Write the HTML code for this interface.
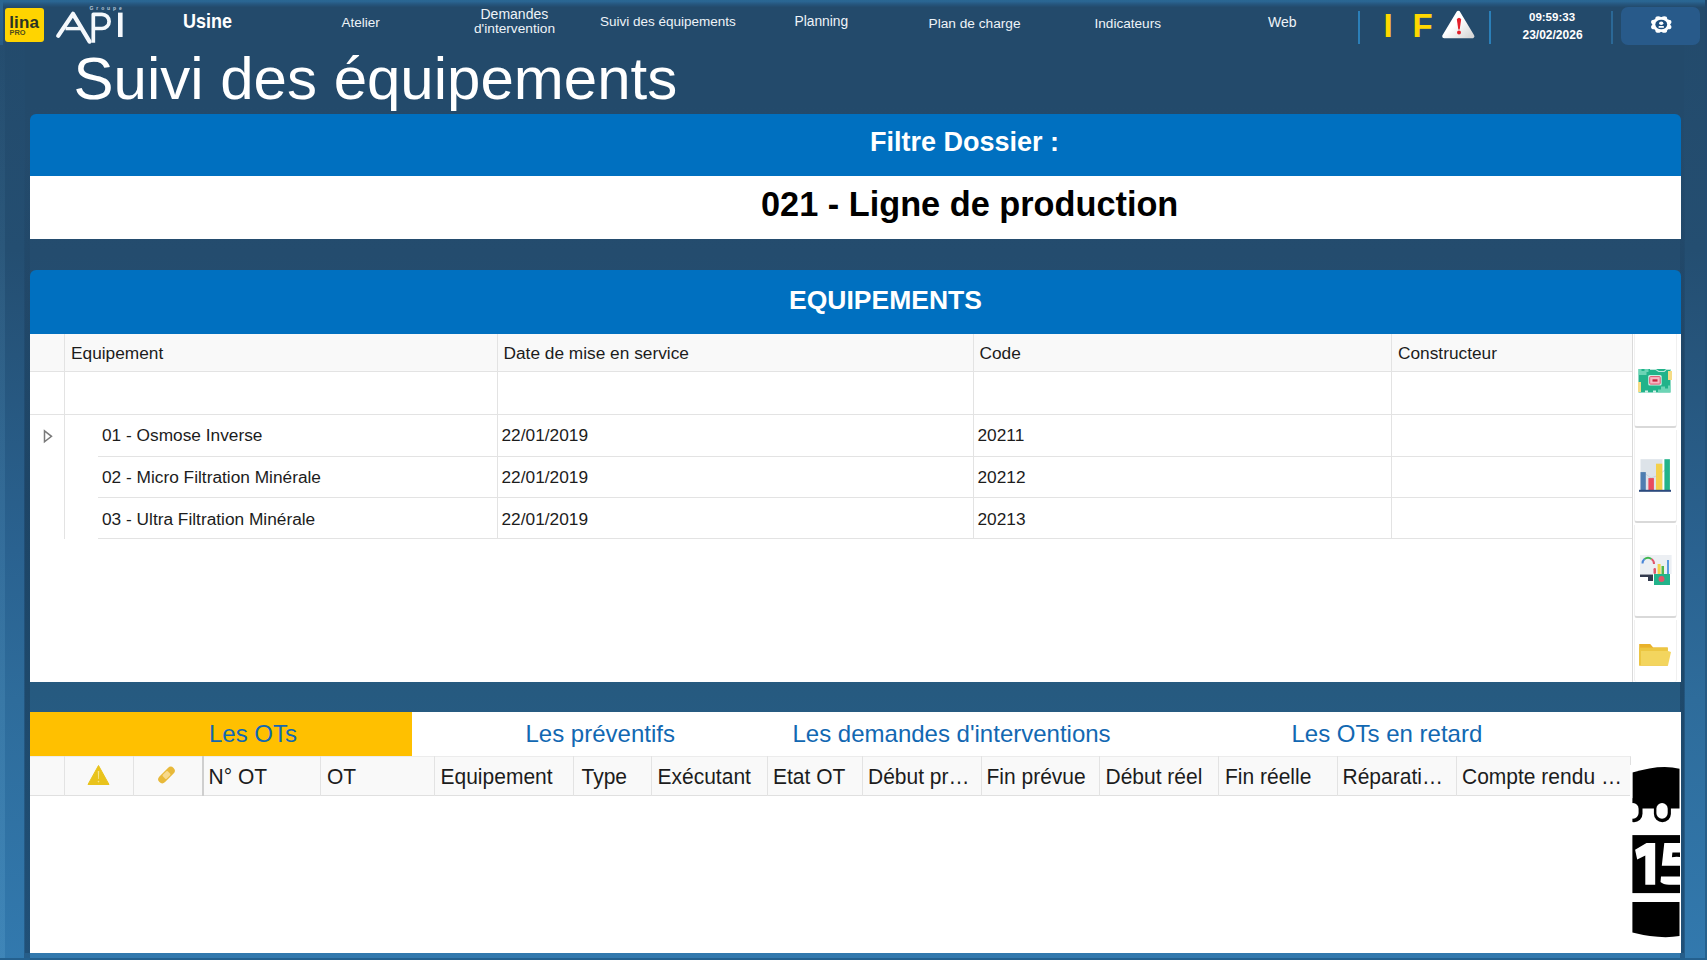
<!DOCTYPE html>
<html><head><meta charset="utf-8">
<style>
*{margin:0;padding:0;box-sizing:border-box}
html,body{width:1707px;height:960px;overflow:hidden}
body{position:relative;font-family:"Liberation Sans",sans-serif;background:linear-gradient(180deg,#234a6b 0px,#244e71 250px,#2a6290 550px,#2e6c9b 700px,#3279ae 960px)}
.ovl{position:absolute;left:25px;top:4px;width:1659px;height:949px;background:linear-gradient(180deg,#234a6b 0px,#234a6b 100px,#244c6e 250px,#265a80 690px,#2a6694 949px)}
.edgeL{position:absolute;left:24px;top:0;width:6px;height:960px;background:linear-gradient(180deg,rgba(10,30,55,0) 0,rgba(10,30,55,0) 150px,rgba(10,30,55,0.28) 500px,rgba(10,30,55,0.3) 960px)}
.edgeR{position:absolute;left:1680px;top:0;width:5px;height:960px;background:linear-gradient(180deg,rgba(10,30,55,0) 0,rgba(10,30,55,0) 150px,rgba(10,30,55,0.28) 500px,rgba(10,30,55,0.3) 960px)}
.lstrip{position:absolute;left:0;top:0;width:5px;height:960px;background:linear-gradient(180deg,rgba(255,255,255,0) 0,rgba(120,190,230,0.10) 300px,rgba(120,190,230,0.18) 960px)}
.a{position:absolute;white-space:nowrap;line-height:1}
.topband{position:absolute;left:0;top:0;width:1707px;height:7px;background:linear-gradient(180deg,#2a6793 0,#2a6592 1.5px,#26577f 4px,#234b6d 7px)}
.nav{color:#eef3f8;font-size:14px}
.sep{position:absolute;top:11px;width:2px;height:33px;background:#2b7fb8}
.panel{position:absolute;left:29.5px;width:1651px;background:#fff}
.phead{position:absolute;left:29.5px;width:1651px;background:#0070c0;border-radius:6px 6px 0 0}
.bg-strip{position:absolute}
.txt{color:#1c1c1c;font-size:17.3px}
.hline{position:absolute;height:1px;background:#e3e3e3}
.vline{position:absolute;width:1px;background:#e3e3e3}
.tab{color:#1268b2;font-size:24px}
.th{color:#1c1c1c;font-size:21px;transform:scaleY(1.08);transform-origin:0 17.8px}
.sbtn{position:absolute;left:1634px;width:43px;background:#fff;border:1px solid #f0f0f0;border-top:none;border-bottom:2px solid #d9d9d9;border-radius:0 0 3px 3px}
</style></head><body>
<div class="ovl"></div>
<div class="lstrip"></div>
<div class="edgeL"></div>
<div class="edgeR"></div>
<div class="topband"></div>
<div class="a" style="left:0;top:0;width:3px;height:45px;background:linear-gradient(180deg,#2c6793,#285b85)"></div>
<div class="a" style="left:0;top:958px;width:1707px;height:2px;background:#24608e"></div>
<div class="a" style="left:1705px;top:0;width:2px;height:960px;background:linear-gradient(180deg,#22476a,#26628f)"></div>

<!-- lina logo -->
<div class="a" style="left:5px;top:8px;width:39px;height:34px;background:#ffd400;border-radius:3px"></div>
<div class="a" style="left:9.3px;top:13.6px;font-size:17px;font-weight:700;color:#2a3324;letter-spacing:0.1px">lina</div>
<div class="a" style="left:9.6px;top:29.3px;font-size:7.4px;font-weight:700;color:#4f4c1c">PRO</div>

<!-- API logo -->
<svg class="a" style="left:0;top:0" width="140" height="50" viewBox="0 0 140 50">
 <g stroke="#f4f8fc" fill="none" stroke-linejoin="round">
  <path d="M58.2,35.8 L73,13.8 L89.6,41.6" stroke-width="4.2" stroke-linecap="round"/>
  <path d="M65.5,28.6 L80.5,28.6" stroke-width="3.4"/>
  <path d="M93.3,42.8 L93.3,14.3 L102,14.3 A7.1,7.1 0 0 1 102,28.5 L93.5,28.5" stroke-width="3.7"/>
  <path d="M120.3,12.6 L120.3,37" stroke-width="4.6"/>
 </g>
 <text x="89.5" y="10.2" font-family="Liberation Sans" font-size="5" font-weight="700" fill="#b7c8d8" letter-spacing="2.9">Groupe</text>
</svg>

<!-- nav -->
<div class="a" style="left:183px;top:12.9px;font-size:18px;font-weight:700;color:#fff;transform:scaleY(1.12);transform-origin:0 15.2px">Usine</div>
<div class="a nav" style="left:341.5px;top:15.5px;font-size:13.5px">Atelier</div>
<div class="a nav" style="left:480.5px;top:6.6px">Demandes</div>
<div class="a nav" style="left:474px;top:21.8px;font-size:13.7px">d'intervention</div>
<div class="a nav" style="left:600px;top:15.2px;font-size:13.5px">Suivi des équipements</div>
<div class="a nav" style="left:794.5px;top:15.4px;font-size:13.8px">Planning</div>
<div class="a nav" style="left:928.5px;top:16.9px;font-size:13.7px">Plan de charge</div>
<div class="a nav" style="left:1094.5px;top:16.9px;font-size:13.6px">Indicateurs</div>
<div class="a nav" style="left:1268px;top:14.9px">Web</div>

<div class="sep" style="left:1357.5px"></div>
<div class="a" style="left:1383.5px;top:9px;font-size:33px;font-weight:700;color:#ffd800">I</div>
<div class="a" style="left:1412.5px;top:9px;font-size:33px;font-weight:700;color:#ffd800">F</div>
<svg class="a" style="left:1440px;top:9px" width="37" height="31" viewBox="0 0 37 31">
 <defs><linearGradient id="wg" x1="0" y1="0" x2="1" y2="1"><stop offset="0.45" stop-color="#fff"/><stop offset="1" stop-color="#d6d6d6"/></linearGradient></defs>
 <polygon points="18.3,3.8 32.4,27.2 4.2,27.2" fill="url(#wg)" stroke="url(#wg)" stroke-width="4" stroke-linejoin="round"/>
 <path d="M16.8,10.2 Q19,7.2 21.2,10.2 L19.7,20.5 L18.3,20.5 Z" fill="#e3202b"/>
 <circle cx="19" cy="23.6" r="2" fill="#e3202b"/>
</svg>
<div class="sep" style="left:1489px"></div>
<div class="a" style="left:1529px;top:11.6px;font-size:11.5px;font-weight:700;color:#fff">09:59:33</div>
<div class="a" style="left:1522.5px;top:29.2px;font-size:12px;font-weight:700;color:#fff">23/02/2026</div>
<div class="sep" style="left:1611px;width:1.5px;background:#2b6896"></div>
<div class="a" style="left:1621px;top:7px;width:79px;height:38px;background:#285a8a;border-radius:7px"></div>
<svg class="a" style="left:1645px;top:10px" width="34" height="30" viewBox="0 0 34 30">
 <g transform="translate(16.25 14.5) scale(1.22 1)">
  <g fill="#fff"><circle r="7.4"/><circle cx="6.01" cy="2.49" r="2.35"/><circle cx="2.49" cy="6.01" r="2.35"/><circle cx="-2.49" cy="6.01" r="2.35"/><circle cx="-6.01" cy="2.49" r="2.35"/><circle cx="-6.01" cy="-2.49" r="2.35"/><circle cx="-2.49" cy="-6.01" r="2.35"/><circle cx="2.49" cy="-6.01" r="2.35"/><circle cx="6.01" cy="-2.49" r="2.35"/></g>
  <circle r="4.85" fill="#1f4f7e"/>
  <circle cx="0" cy="-1.3" r="1.75" fill="#fff"/>
  <rect x="-2.2" y="1.6" width="4.4" height="1.6" rx="0.5" fill="#fff"/>
 </g>
</svg>

<!-- title -->
<div class="a" style="left:73.5px;top:49.2px;font-size:60px;color:#fff">Suivi des équipements</div>

<!-- panel 1 -->
<div class="phead" style="top:114px;height:62px"></div>
<div class="panel" style="top:176px;height:63px"></div>
<div class="a" style="left:870px;top:129.3px;font-size:27px;font-weight:700;color:#fff">Filtre Dossier :</div>
<div class="a" style="left:761px;top:186.6px;font-size:34.3px;font-weight:700;color:#000">021 - Ligne de production</div>

<!-- panel 2 -->
<div class="phead" style="top:270px;height:64px"></div>
<div class="panel" style="top:334px;height:348px"></div>
<div class="a" style="left:789px;top:287.2px;font-size:26.5px;font-weight:700;color:#fff">EQUIPEMENTS</div>
<!-- table header -->
<div class="a" style="left:29.5px;top:334px;width:1602.5px;height:37px;background:#f9f9f9"></div>
<div class="hline" style="left:30px;top:371px;width:1602px"></div>
<div class="hline" style="left:30px;top:414px;width:1602px"></div>
<div class="hline" style="left:98px;top:455.5px;width:1534px"></div>
<div class="hline" style="left:98px;top:497px;width:1534px"></div>
<div class="hline" style="left:98px;top:538px;width:1534px"></div>
<div class="vline" style="left:64px;top:334px;height:205px"></div>
<div class="vline" style="left:496.5px;top:334px;height:204px"></div>
<div class="vline" style="left:972.5px;top:334px;height:204px"></div>
<div class="vline" style="left:1391px;top:334px;height:204px"></div>
<div class="vline" style="left:1632px;top:334px;height:348px;background:#dadada"></div>
<div class="a txt" style="left:71px;top:345.2px">Equipement</div>
<div class="a txt" style="left:503.5px;top:345.2px">Date de mise en service</div>
<div class="a txt" style="left:979.5px;top:345.2px">Code</div>
<div class="a txt" style="left:1398px;top:345.2px">Constructeur</div>
<svg class="a" style="left:42px;top:429px" width="12" height="15" viewBox="0 0 12 15"><path d="M2.5,1.8 L9.5,7.3 L2.5,12.8 Z" fill="none" stroke="#7a7a7a" stroke-width="1.5"/></svg>
<div class="a txt" style="left:102px;top:427.4px">01 - Osmose Inverse</div>
<div class="a txt" style="left:102px;top:469px">02 - Micro Filtration Minérale</div>
<div class="a txt" style="left:102px;top:510.5px">03 - Ultra Filtration Minérale</div>
<div class="a txt" style="left:501.5px;top:427.4px">22/01/2019</div>
<div class="a txt" style="left:501.5px;top:469px">22/01/2019</div>
<div class="a txt" style="left:501.5px;top:510.5px">22/01/2019</div>
<div class="a txt" style="left:977.5px;top:427.4px">20211</div>
<div class="a txt" style="left:977.5px;top:469px">20212</div>
<div class="a txt" style="left:977.5px;top:510.5px">20213</div>

<!-- sidebar buttons -->
<div class="sbtn" style="top:334px;height:94px"></div>
<div class="sbtn" style="top:430px;height:93px"></div>
<div class="sbtn" style="top:525px;height:93px"></div>
<div class="sbtn" style="top:620px;height:62px;border-bottom:none"></div>

<!-- panel 3 -->
<div class="panel" style="top:712px;height:241px"></div>
<div class="a" style="left:29.5px;top:712px;width:382.5px;height:44px;background:#ffc000"></div>
<div class="a tab" style="left:209px;top:722.2px">Les OTs</div>
<div class="a tab" style="left:525.5px;top:722.2px">Les préventifs</div>
<div class="a tab" style="left:792.5px;top:722.2px">Les demandes d'interventions</div>
<div class="a tab" style="left:1291.5px;top:722.2px">Les OTs en retard</div>
<div class="a" style="left:29.5px;top:756px;width:1601.5px;height:40px;background:#f9f9f9;border-top:1px solid #ececec;border-bottom:1px solid #e0e0e0;border-right:1px solid #e0e0e0"></div>
<div class="vline" style="left:64px;top:756px;height:40px"></div>
<div class="vline" style="left:133px;top:756px;height:40px"></div>
<div class="vline" style="left:202px;top:756px;height:40px;width:2px;background:#cfcfcf"></div>
<div class="vline" style="left:320px;top:756px;height:40px"></div>
<div class="vline" style="left:433.5px;top:756px;height:40px"></div>
<div class="vline" style="left:573px;top:756px;height:40px"></div>
<div class="vline" style="left:651px;top:756px;height:40px"></div>
<div class="vline" style="left:767px;top:756px;height:40px"></div>
<div class="vline" style="left:861.5px;top:756px;height:40px"></div>
<div class="vline" style="left:980.5px;top:756px;height:40px"></div>
<div class="vline" style="left:1099px;top:756px;height:40px"></div>
<div class="vline" style="left:1218px;top:756px;height:40px"></div>
<div class="vline" style="left:1336.5px;top:756px;height:40px"></div>
<div class="vline" style="left:1455.5px;top:756px;height:40px"></div>
<svg class="a" style="left:86px;top:764px" width="25" height="22" viewBox="0 0 25 22"><path d="M12.5,1.5 L23,20.5 L2,20.5 Z" fill="#e9c31c" stroke="#e9c31c" stroke-width="1" stroke-linejoin="round"/><path d="M11.8,7 h1.4 l-0.3,8 h-0.8 z" fill="#f6e48a"/><circle cx="12.5" cy="17.6" r="0.8" fill="#f6e48a"/></svg>
<svg class="a" style="left:155px;top:763px" width="23" height="24" viewBox="0 0 23 24"><g transform="rotate(-45 11.5 12)"><rect x="1.5" y="8" width="20" height="8" rx="4" fill="#e8b93a"/><rect x="8" y="9.3" width="7" height="5.4" rx="1" fill="#f7d98c"/></g></svg>
<div class="a th" style="left:208.5px;top:765.7px">N° OT</div>
<div class="a th" style="left:327px;top:765.7px">OT</div>
<div class="a th" style="left:440.5px;top:765.7px">Equipement</div>
<div class="a th" style="left:581.5px;top:765.7px">Type</div>
<div class="a th" style="left:657.5px;top:765.7px">Exécutant</div>
<div class="a th" style="left:773px;top:765.7px">Etat OT</div>
<div class="a th" style="left:868px;top:765.7px">Début pr…</div>
<div class="a th" style="left:986.5px;top:765.7px">Fin prévue</div>
<div class="a th" style="left:1105.5px;top:765.7px">Début réel</div>
<div class="a th" style="left:1225px;top:765.7px">Fin réelle</div>
<div class="a th" style="left:1342.5px;top:765.7px">Réparati…</div>
<div class="a th" style="left:1462px;top:765.7px">Compte rendu …</div>


<!-- sidebar icons -->
<svg class="a" style="left:1636px;top:366px" width="38" height="30" viewBox="0 0 38 30">
 <rect x="2.5" y="3" width="32" height="23.5" fill="#22b38a"/>
 <path d="M2.5,3 h3 v2 h3 v-2 h4 v3 h-2 v3 h-8 z" fill="#7fdcbf" opacity="0.8"/>
 <path d="M22,26.5 v-3 h3 v-3 h4 v2 h3 v-3 h2.5 v7 z" fill="#7fdcbf" opacity="0.8"/>
 <path d="M14,3 h6 l3,2 h5 l2,-2 h4.5 v1 h-4 l-2,2 h-6 l-3,-2 h-5.5 z" fill="#fff" opacity="0.7"/>
 <path d="M9,26.5 v-2 h3 v2 z M17,26.5 v-2 h3 v2 z" fill="#fff" opacity="0.8"/>
 <rect x="32" y="5" width="4" height="9" fill="#f5dc86"/>
 <rect x="2" y="16" width="3" height="10" fill="#f5dc86"/>
 <rect x="12.2" y="9.1" width="13.5" height="10.5" rx="1.5" fill="#c9f2e4"/>
 <rect x="13.7" y="10.6" width="10.5" height="7.5" rx="0.8" fill="#f7b7c3" stroke="#e25470" stroke-width="1"/>
 <rect x="16.5" y="13.3" width="5" height="2.3" fill="#c8233e"/>
</svg>
<svg class="a" style="left:1636px;top:456px" width="38" height="38" viewBox="0 0 38 38">
 <rect x="4.5" y="3.2" width="22" height="30.6" fill="#dde3e9"/>
 <path d="M7,16 L15,22 L23,19 L30,13" stroke="#c8d2dc" stroke-width="1" fill="none"/>
 <rect x="4.5" y="16.1" width="5.3" height="17.9" fill="#4e7db1"/>
 <rect x="12.4" y="22.1" width="5.5" height="11.9" fill="#e84a5e"/>
 <rect x="20" y="7.7" width="6.3" height="26.3" fill="#f4d04b"/>
 <rect x="28.4" y="3.2" width="5.5" height="30.8" fill="#22b38a"/>
 <rect x="3" y="33.8" width="32" height="2" fill="#2b4a7d"/>
</svg>
<svg class="a" style="left:1636px;top:552px" width="38" height="36" viewBox="0 0 38 36">
 <rect x="4" y="3" width="31.6" height="19" fill="#eceff3"/>
 <path d="M6.5,11.5 A5.8,5.8 0 0 1 8.5,7" stroke="#4a86d8" stroke-width="2" fill="none"/>
 <path d="M8.5,7 A5.8,5.8 0 0 1 15.5,7" stroke="#3fb64e" stroke-width="2" fill="none"/>
 <path d="M15.5,7 A5.8,5.8 0 0 1 18,12" stroke="#e0566a" stroke-width="2" fill="none"/>
 <rect x="17.5" y="16" width="2.5" height="6" rx="1.2" fill="#e0566a"/>
 <rect x="21.6" y="12" width="3" height="10" fill="#f3d44c"/>
 <rect x="25.5" y="14" width="2.5" height="8" fill="#52b84c"/>
 <rect x="31" y="8" width="2" height="14" fill="#5a9be0"/>
 <rect x="4" y="22.5" width="13" height="2.5" fill="#333a4e"/>
 <rect x="12" y="25" width="5" height="4" fill="#333a4e"/>
 <rect x="18" y="22" width="16" height="11" fill="#22b38a"/>
 <circle cx="25.5" cy="27" r="3" fill="#e0566a"/>
</svg>
<svg class="a" style="left:1636px;top:640px" width="38" height="30" viewBox="0 0 38 30">
 <path d="M3.2,4 h11 l3,3.6 h14.5 v18 h-28.5 z" fill="#e9b22a"/>
 <path d="M3.2,7.6 h28.5 v18 h-28.5 z" fill="#ecc641"/>
 <path d="M5,11 h27 l3,1 l-3,13.6 h-27 z" fill="#f3d55e"/>
</svg>

<!-- calendar icon (clipped) -->
<svg class="a" style="left:1630px;top:765px" width="49.5" height="176" viewBox="0 0 49.5 176">
 <path d="M2.4,43.6 L2.4,7.6 Q30,-1 49.5,3.7 L49.5,43.6 Z" fill="#000"/>
 <rect x="-4.5" y="33" width="17" height="24.3" rx="8.5" fill="#000"/>
 <rect x="-2.7" y="38.1" width="11.3" height="15.6" rx="5.6" fill="#fff"/>
 <rect x="23.9" y="33" width="17" height="24.3" rx="8.5" fill="#000"/>
 <rect x="26.4" y="38.1" width="11.3" height="15.6" rx="5.6" fill="#fff"/>
 <rect x="0" y="0" width="2.4" height="176" fill="#fff"/>
 <rect x="2.4" y="70.1" width="60" height="58" fill="#000"/>
 <path d="M2.4,137 L49.5,137 L49.5,171 Q30,174.5 2.4,167.5 Z" fill="#000"/>
 <g fill="#fff">
  <path d="M5.1,84.7 L16.5,78.1 L25.2,78.1 L25.2,119.7 L15.3,119.7 L15.3,90.5 L7.2,94.5 Z"/>
  <path d="M34.3,78.1 L50,78.1 L50,87.6 L42.4,87.6 L41.9,92.2 Q46,91.4 50,92 L50,119.7 L39,119.7 Q33,119.5 30.5,117 L31,111.6 L50,111.6 L50,100.8 L31.8,100.8 Z"/>
 </g>
</svg>

</body></html>
